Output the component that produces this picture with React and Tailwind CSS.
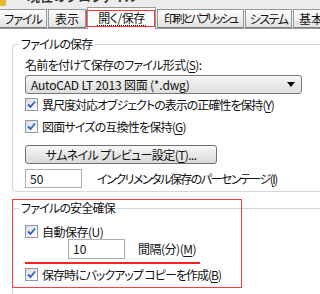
import React from "react";

const jp = { fontFamily: '"Noto Sans CJK JP", "Noto Sans", sans-serif' };

const Key = ({ k }) => (
  <>
    (<span className="underline underline-offset-2">{k}</span>)
  </>
);

const Check = ({ children, cls = "" }) => (
  <div className="flex items-center h-[13px] gap-[4px]">
    <span className="w-[13px] h-[13px] border border-[#8d99ab] bg-gradient-to-br from-[#dcdcdc] to-white flex items-center justify-center shrink-0">
      <svg width="9" height="9" viewBox="0 0 9 9">
        <path d="M1 4.5 L3.5 7 L8 1.5" fill="none" stroke="#2f5ec4" strokeWidth="1.8" />
      </svg>
    </span>
    <span className={`leading-none whitespace-nowrap ${cls}`}>{children}</span>
  </div>
);

const tabs = [
  { label: "ファイル", w: "w-[48px]", t: "tracking-[-1px]" },
  { label: "表示", w: "w-[38px]", t: "" },
  { label: "開く/保存", w: "w-[69px]", on: true, t: "tracking-[-0.5px]" },
  { label: "印刷とパブリッシュ", w: "w-[87px]", t: "tracking-[-2.2px] text-[11.5px]" },
  { label: "システム", w: "w-[47px]", t: "tracking-[-1.5px]" },
  { label: "基本設定", w: "w-[60px]", t: "" },
];

export default function App() {
  return (
    <div
      className="relative w-[320px] h-[294px] overflow-hidden bg-white text-[12px] text-[#111] [font-feature-settings:'palt']"
      style={jp}
    >
      {/* window title strip, cut off */}
      <div className="h-[9px] bg-[#ececec] overflow-hidden flex items-start">
        <span className="w-[6px] h-[6px] bg-[#e8b82a] rounded-br-[2px] shrink-0" />
        <span className="ml-[21px] mt-[-13px] text-[13px] leading-[18px] font-bold text-[#333] whitespace-nowrap">
          現在のプロファイル
        </span>
      </div>

      {/* tabs */}
      <div className="relative h-[20px] bg-[#ececec] flex items-end gap-[1px] ml-[-1px] border-b border-[#919b9c]">
        {tabs.map((t) =>
          t.on ? (
            <div
              key={t.label}
              className={`${t.w} h-[22px] mb-[-1px] bg-white border border-b-0 border-[#919b9c] flex items-center justify-center shrink-0`}
            >
              <span className={`border-b border-dotted border-black leading-[14px] px-[1px] ${t.t}`}>
                {t.label}
              </span>
            </div>
          ) : (
            <div
              key={t.label}
              className={`${t.w} h-[19px] bg-gradient-to-b from-[#fdfdfd] to-[#e3e3e3] border border-[#919b9c] border-b-[#7f7f7f] flex items-center justify-center shrink-0 whitespace-nowrap overflow-hidden ${t.t}`}
            >
              {t.label}
            </div>
          )
        )}
      </div>

      {/* content */}
      <div className="pl-[12px] pt-[15px]">
        {/* group 1 */}
        <div className="relative mr-[-10px] h-[148px] border border-[#d0d7dd] rounded-[4px] pl-[12px] pt-[13px]">
          <span className="absolute left-[6px] top-[-8px] bg-white px-[2px] leading-[14px] tracking-[-0.8px]">
            ファイルの保存
          </span>
          <div className="leading-[14px] whitespace-nowrap tracking-[-0.7px]">
            名前を付けて保存のファイル形式<Key k="S" />:
          </div>
          <div className="mt-[3px] w-[277px] h-[19px] border border-[#7a7a7a] rounded-[3px] bg-gradient-to-b from-[#f6f6f6] to-[#dedede] flex items-center pl-[5px] pr-[6px]">
            <span className="flex-1 whitespace-nowrap leading-none tracking-[-0.2px]">AutoCAD LT 2013 図面 (*.dwg)</span>
            <svg width="8" height="5" viewBox="0 0 8 5">
              <path d="M0 0 H8 L4 5 Z" fill="#000" />
            </svg>
          </div>
          <div className="mt-[4px] flex flex-col gap-[9px]">
            <Check cls="tracking-[-1px]">
              異尺度対応オブジェクトの表示の正確性を保持<Key k="Y" />
            </Check>
            <Check cls="tracking-[-0.8px]">
              図面サイズの互換性を保持<Key k="G" />
            </Check>
          </div>
          <div className="mt-[12px] w-[192px] h-[19px] border border-[#707070] rounded-[3px] bg-gradient-to-b from-[#f8f8f8] to-[#d9d9d9] flex items-center justify-center whitespace-nowrap tracking-[-0.6px]">
            サムネイル プレビュー設定<Key k="T" />...
          </div>
          <div className="mt-[5px] flex items-center">
            <div className="w-[57px] h-[19px] border border-[#abadb3] bg-white pl-[4px] flex items-center leading-none">
              50
            </div>
            <span className="ml-[15px] whitespace-nowrap leading-none tracking-[-1.5px]">
              インクリメンタル保存のパーセンテージ<Key k="I" />
            </span>
          </div>
        </div>

        {/* group 2 */}
        <div className="relative mt-[16px] mr-[-10px] h-[100px] border border-[#d0d7dd] rounded-[4px] pl-[12px] pt-[16px]">
          <span className="absolute left-[6px] top-[-8px] bg-white px-[2px] leading-[14px] tracking-[-0.8px]">
            ファイルの安全確保
          </span>
          <Check cls="tracking-[-0.5px]">
            自動保存<Key k="U" />
          </Check>
          <div className="mt-[1px] ml-[43px] flex items-center">
            <div className="w-[57px] h-[20px] border border-[#abadb3] bg-white pl-[4px] flex items-center leading-none">
              10
            </div>
            <span className="ml-[13px] whitespace-nowrap leading-none tracking-[-0.5px]">
              間隔(分)<Key k="M" />
            </span>
          </div>
          <div className="mt-[9px]">
            <Check cls="tracking-[-1px]">
              保存時にバックアップ コピーを作成<Key k="B" />
            </Check>
          </div>
        </div>
      </div>

      {/* red annotations */}
      <div className="absolute left-[86px] top-[10px] w-[69px] h-[17px] border border-[#ff3333]" />
      <div className="absolute left-[12px] top-[199px] w-[230px] h-[89px] border border-[#ff3b3b]" />
      <div className="absolute left-[25px] top-[262px] w-[175px] h-[2px] bg-[#ff2020]" />
    </div>
  );
}
